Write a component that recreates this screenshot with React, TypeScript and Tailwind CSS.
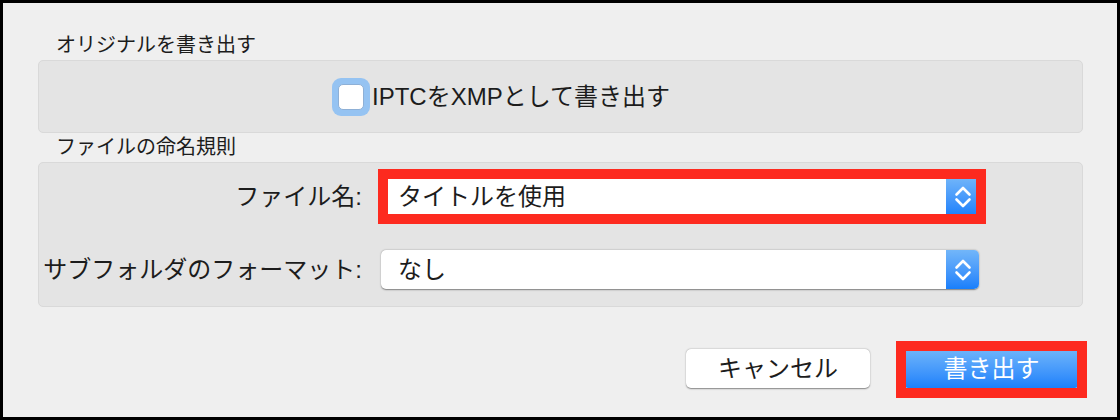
import React from 'react'

const font = "font-['Liberation_Sans','Noto_Sans_CJK_JP',sans-serif]"

// 青いステッパー（上下の矢印）
function Stepper() {
  return (
    <div className="flex h-full w-[33px] shrink-0 items-center justify-center rounded-r-[5px] bg-gradient-to-b from-[#72b6f9] to-[#187ffb]">
      <svg className="h-[26px] w-[18px] shrink-0" viewBox="0 0 18 26" fill="none">
        <path d="M2.5 10.5 L9 4 L15.5 10.5" stroke="white" strokeWidth="2.6" strokeLinecap="round" strokeLinejoin="round" />
        <path d="M2.5 15.5 L9 22 L15.5 15.5" stroke="white" strokeWidth="2.6" strokeLinecap="round" strokeLinejoin="round" />
      </svg>
    </div>
  )
}

function Popup({ value, highlight }: { value: string; highlight?: boolean }) {
  return (
    <div className="relative ml-[19px] w-[598px]">
      <div className="flex h-[39px] items-center rounded-[5px] bg-white shadow-[0_0.5px_1.5px_rgba(0,0,0,0.45)]">
        <span className="flex-1 pl-[17px] text-[24px] leading-none">{value}</span>
        <Stepper />
      </div>
      {highlight && (
        <span className="pointer-events-none absolute -top-[8px] -bottom-[8px] -left-[3px] -right-[7px] border-[10px] border-[#fd2a1f]" />
      )}
    </div>
  )
}

export default function App() {
  return (
    <div className={`${font} h-[420px] w-[1120px] border-[3px] border-black bg-[#efefef] pl-[35px] pr-[34px] text-[#1c1c1c]`}>
      <div className="mt-[30px] mb-[3px] pl-[18px] text-[20px] leading-[24px]">オリジナルを書き出す</div>

      <div className="flex h-[73px] items-center rounded-[5px] border border-[#d9d9d9] bg-[#e4e4e4]">
        <div className="ml-[293px] flex items-center">
          <div className="flex h-[38px] w-[38px] items-center justify-center rounded-[9px] bg-[#95c3f2]">
            <div className="h-[26px] w-[26px] rounded-[5px] border border-[#8eb0d6] bg-white" />
          </div>
          <span className="ml-[2px] text-[24px] leading-none">IPTCをXMPとして書き出す</span>
        </div>
      </div>

      <div className="mt-[2px] mb-[3px] pl-[18px] text-[20px] leading-[24px]">ファイルの命名規則</div>

      <div className="flex h-[145px] flex-col rounded-[5px] border border-[#d9d9d9] bg-[#e4e4e4] pt-[14px]">
        <div className="flex items-center">
          <span className="w-[323px] text-right text-[24px] leading-none">ファイル名:</span>
          <Popup value="タイトルを使用" highlight />
        </div>
        <div className="mt-[34px] flex items-center">
          <span className="w-[323px] text-right text-[24px] leading-none">サブフォルダのフォーマット:</span>
          <Popup value="なし" />
        </div>
      </div>

      <div className="mt-[42px] flex justify-end pr-[3px]">
        <button className="flex h-[39px] w-[184px] items-center justify-center rounded-[5px] bg-white text-[24px] leading-none shadow-[0_0.5px_1.5px_rgba(0,0,0,0.45)]">
          キャンセル
        </button>
        <div className="relative ml-[33px]">
          <button className="flex h-[39px] w-[177px] items-center justify-center rounded-[5px] bg-gradient-to-b from-[#6fb5fa] to-[#1a80fb] text-[24px] leading-none text-white">
            書き出す
          </button>
          <span className="pointer-events-none absolute -top-[8px] -bottom-[10px] -left-[7px] -right-[7px] border-[10px] border-[#fd2a1f]" />
        </div>
      </div>
    </div>
  )
}
